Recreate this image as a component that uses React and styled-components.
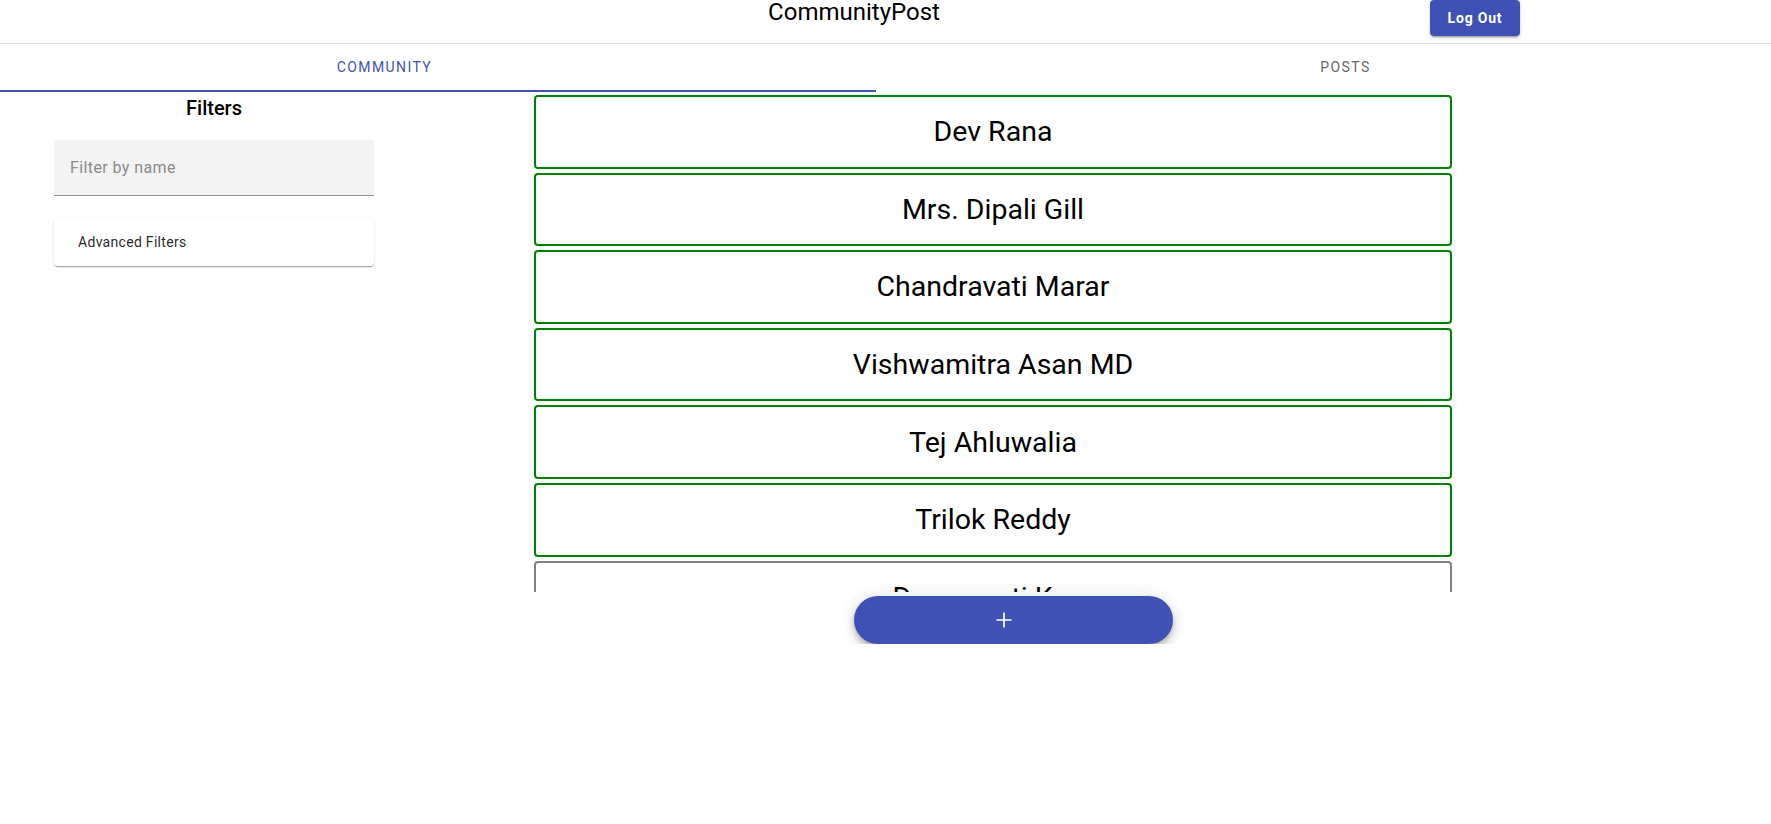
import styled, { createGlobalStyle } from 'styled-components'

const GlobalStyle = createGlobalStyle`
  body {
    margin: 0;
    font-family: Roboto, "Liberation Sans", sans-serif;
    background: #fff;
    color: #000;
  }
`;

const Header = styled.header`
  display: flex;
  align-items: flex-start;
  height: 43px;
  border-bottom: 1px solid #e0e0e0;
`;

const Title = styled.h1`
  margin: 0 0 0 684px;
  width: 340px;
  text-align: center;
  font-size: 24px;
  font-weight: 400;
  line-height: 24px;
  color: #000;
`;

const LogOutButton = styled.button`
  margin-left: auto;
  margin-right: 251px;
  width: 90px;
  height: 36px;
  border: none;
  border-radius: 4px;
  background: #3f51b5;
  color: #fff;
  font-family: Roboto, "Liberation Sans", sans-serif;
  font-size: 14px;
  font-weight: 700;
  letter-spacing: 0.8px;
  cursor: pointer;
  box-shadow: 0 3px 1px -2px rgba(0,0,0,0.2), 0 2px 2px 0 rgba(0,0,0,0.14), 0 1px 5px 0 rgba(0,0,0,0.12);
`;

const TabList = styled.nav`
  display: grid;
  grid-template-columns: 769px 1fr;
  column-gap: 151px;
  height: 46px;
`;

const Tab = styled.button`
  display: flex;
  align-items: center;
  justify-content: center;
  border: none;
  background: none;
  padding: 0;
  font-family: Roboto, "Liberation Sans", sans-serif;
  font-size: 14px;
  font-weight: 400;
  letter-spacing: 1.4px;
  text-transform: uppercase;
  color: ${p => (p.$selected ? '#3f51b5' : '#666')};
  cursor: pointer;
`;

const Indicator = styled.div`
  width: 876px;
  height: 2px;
  background: #3f51b5;
`;

const Main = styled.main`
  display: grid;
  grid-template-columns: 428px 918px;
  column-gap: 106px;
  align-items: start;
`;

const Sidebar = styled.aside`
  display: flex;
  flex-direction: column;
  align-items: center;
`;

const SideTitle = styled.h2`
  margin: 0;
  font-size: 20px;
  font-weight: 500;
  line-height: 32px;
`;

const FilterField = styled.div`
  margin-top: 16px;
  width: 320px;
  height: 56px;
  box-sizing: border-box;
  display: flex;
  background: #f3f3f3;
  border-radius: 4px 4px 0 0;
  border-bottom: 1px solid #949494;
`;

const FilterInput = styled.input`
  flex: 1;
  border: none;
  background: transparent;
  padding: 0 16px;
  font-family: Roboto, "Liberation Sans", sans-serif;
  font-size: 16px;
  letter-spacing: 0.4px;
  color: #000;

  &::placeholder {
    color: #8a8a8a;
  }

  &:focus {
    outline: none;
  }
`;

const AdvancedCard = styled.div`
  margin-top: 22px;
  width: 320px;
  height: 48px;
  box-sizing: border-box;
  display: flex;
  align-items: center;
  padding-left: 24px;
  border-radius: 4px;
  background: #fff;
  font-size: 14px;
  font-weight: 400;
  letter-spacing: 0.3px;
  color: rgba(0,0,0,0.87);
  box-shadow: 0 2px 1px -1px rgba(0,0,0,0.2), 0 1px 1px 0 rgba(0,0,0,0.14), 0 1px 3px 0 rgba(0,0,0,0.12);
`;

const Content = styled.section`
  display: flex;
  flex-direction: column;
`;

const MemberList = styled.div`
  margin-top: 3px;
  height: 497px;
  overflow: hidden;
  display: flex;
  flex-direction: column;
  gap: 4px;
`;

const MemberCard = styled.div`
  flex-shrink: 0;
  height: 73.6px;
  box-sizing: border-box;
  display: flex;
  align-items: center;
  justify-content: center;
  border: 2px solid ${p => (p.$muted ? '#808080' : '#008000')};
  border-radius: 4px;
  font-size: 28.5px;
  color: #000;
`;

const FabRow = styled.div`
  display: flex;
  padding-left: 320px;
  margin-top: 4px;
`;

const Fab = styled.button`
  width: 319px;
  height: 48px;
  border: none;
  border-radius: 24px;
  background: #3f51b5;
  color: #fff;
  display: flex;
  align-items: center;
  justify-content: center;
  padding: 0 19px 0 0;
  cursor: pointer;
  box-shadow: 0 3px 5px -1px rgba(0,0,0,0.2), 0 6px 10px 0 rgba(0,0,0,0.14), 0 1px 18px 0 rgba(0,0,0,0.12);
`;

const members = [
  { name: 'Dev Rana' },
  { name: 'Mrs. Dipali Gill' },
  { name: 'Chandravati Marar' },
  { name: 'Vishwamitra Asan MD' },
  { name: 'Tej Ahluwalia' },
  { name: 'Trilok Reddy' },
  { name: 'Damayanti Kaur', muted: true },
  { name: 'Ojas Bhat' },
  { name: 'Lakshmi Iyer' },
];

const PlusIcon = () => (
  <svg width="26" height="26" viewBox="0 0 24 24" fill="currentColor">
    <path d="M19 12.8h-6.2V19h-1.6v-6.2H5v-1.6h6.2V5h1.6v6.2H19z" />
  </svg>
);

const App = () => {
  return (
    <>
      <GlobalStyle />
      <Header>
        <Title>CommunityPost</Title>
        <LogOutButton>Log Out</LogOutButton>
      </Header>
      <TabList>
        <Tab $selected>Community</Tab>
        <Tab>Posts</Tab>
      </TabList>
      <Indicator />
      <Main>
        <Sidebar>
          <SideTitle>Filters</SideTitle>
          <FilterField>
            <FilterInput type="text" placeholder="Filter by name" />
          </FilterField>
          <AdvancedCard>Advanced Filters</AdvancedCard>
        </Sidebar>
        <Content>
          <MemberList>
            {members.map(m => (
              <MemberCard key={m.name} $muted={m.muted}>{m.name}</MemberCard>
            ))}
          </MemberList>
          <FabRow>
            <Fab aria-label="add"><PlusIcon /></Fab>
          </FabRow>
        </Content>
      </Main>
    </>
  )
}

export default App
